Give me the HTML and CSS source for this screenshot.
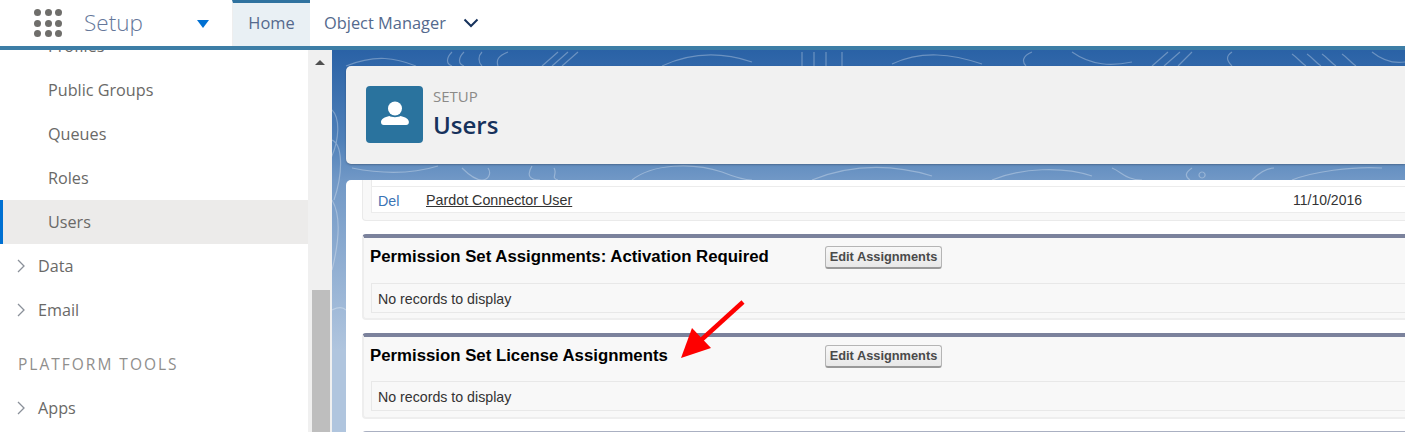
FILE: index.html
```html
<!DOCTYPE html>
<html lang="en">
<head>
  <meta charset="UTF-8">
  <title>Users | Setup</title>
  <link rel="stylesheet" href="styles.css">
</head>
<body>
  <header class="topbar">
    <div class="waffle">
      <i></i><i></i><i></i><i></i><i></i><i></i><i></i><i></i><i></i>
    </div>
    <span class="app-name">Setup</span>
    <span class="app-caret"></span>
    <a class="tab tab-active">Home</a>
    <a class="tab">Object Manager</a>
    <svg class="tab-chevron" width="16" height="10" viewBox="0 0 16 10"><path d="M1.5 1.5 8 8l6.500-6.500" fill="none" stroke="#16325c" stroke-width="2"/></svg>
  </header>

  <div class="main">
    <nav class="sidebar">
      <a class="nav-item nav-first">Profiles</a>
      <a class="nav-item">Public Groups</a>
      <a class="nav-item">Queues</a>
      <a class="nav-item">Roles</a>
      <a class="nav-item nav-active">Users</a>
      <a class="nav-item nav-parent"><svg class="arrow" width="9" height="14" viewBox="0 0 9 14"><path d="M1 1l6 6-6 6" fill="none" stroke="#8a9099" stroke-width="1.300"/></svg>Data</a>
      <a class="nav-item nav-parent"><svg class="arrow" width="9" height="14" viewBox="0 0 9 14"><path d="M1 1l6 6-6 6" fill="none" stroke="#8a9099" stroke-width="1.300"/></svg>Email</a>
      <div class="nav-title">PLATFORM TOOLS</div>
      <a class="nav-item nav-parent"><svg class="arrow" width="9" height="14" viewBox="0 0 9 14"><path d="M1 1l6 6-6 6" fill="none" stroke="#8a9099" stroke-width="1.300"/></svg>Apps</a>
    </nav>

    <div class="scrollbar">
      <span class="scroll-up"></span>
      <div class="scroll-thumb"></div>
    </div>

    <div class="content">
      <svg class="topo" width="1073" height="382" viewBox="0 0 1073 382" fill="none" stroke="#fff" stroke-opacity=".3" stroke-width="1.200">
        <path d="M14 16c30-12 50-8 70 0M120 2c-6 6-6 12 0 14M132 2c-6 6-6 12 0 14M150 2c-4 4-4 10 0 14M176 2c-10 4-12 8-10 14M210 16 226 2M220 16 236 2M230 16 246 2"/>
        <path d="M330 16c30-14 60-14 90-4M470 2v14M482 2v14M494 2v14M510 2v14M560 14c30-14 60-10 90 0M700 2c-10 4-10 10-6 14M740 2c20 14 40 14 60 10M820 16 836 2M832 16 848 2M846 16 860 2M900 16c-6-6-6-10 0-14M960 4c6 4 8 8 14 12M975 4c6 4 8 8 14 12M990 4c6 4 8 8 14 12M1010 4c6 4 8 8 14 12M1040 2c10 8 20 12 33 10"/>
        <path d="M20 118c30 6 60 6 86-2M130 118c8 8 14 12 20 12s10-6 6-12M200 116c-6 10-2 14 8 14M222 118c4 6-4 10 4 12M300 130c20-16 60-18 90-8 10 4 20 8 30 8M480 130c40-16 80-16 120-4M660 130c30-12 70-14 100-4M780 118c10 4 14 12 30 12M860 118c-6 4-8 8-2 12M870 122a3 3 0 1 0 .100 0M920 130c6-6 14-12 22-12M960 130c20-8 60-14 90-12"/>
        <path d="M0 60c8 8 8 30-2 50M0 90c10 4 12 30 2 60M0 150c6 10 10 30 0 70M0 260c8-4 12-2 14 0"/>
      </svg>

      <section class="title-card">
        <div class="title-icon">
          <svg width="30" height="28" viewBox="0 0 30 28"><circle cx="15" cy="8.500" r="7" fill="#fff"/><path d="M3 25c-2 0-3-1-3-3 0-3 4-5 9-6 2 1.500 10 1.500 12 0 5 1 9 3 9 6 0 2-1 3-3 3z" fill="#fff" transform="translate(1 0) scale(.93 1)"/></svg>
        </div>
        <div class="title-text">
          <div class="title-over">SETUP</div>
          <h1 class="title-main">Users</h1>
        </div>
      </section>

      <div class="panel">
        <div class="list-end">
          <div class="row-gap"></div>
          <div class="user-row">
            <a class="del">Del</a>
            <a class="user-link">Pardot Connector User</a>
            <span class="user-date">11/10/2016</span>
          </div>
        </div>

        <section class="related">
          <div class="related-head">
            <h3 class="related-title">Permission Set Assignments: Activation Required</h3>
            <button class="btn">Edit Assignments</button>
          </div>
          <div class="no-records">No records to display</div>
        </section>

        <section class="related related-second">
          <div class="related-head">
            <h3 class="related-title">Permission Set License Assignments</h3>
            <button class="btn">Edit Assignments</button>
          </div>
          <div class="no-records">No records to display</div>
        </section>

        <section class="related related-last"></section>
      </div>

      <svg class="red-arrow" width="66" height="60" viewBox="0 0 66 60"><path d="M63 2 19.500 41.500" stroke="#fe0000" stroke-width="4.500" fill="none"/><path d="M1 58 12 28l19 20z" fill="#fe0000"/></svg>
    </div>
  </div>
</body>
</html>
```

FILE: styles.css
```css
html, body {
  margin: 0;
  height: 432px;
  overflow: hidden;
  background: #fff;
}

body {
  display: flex;
  flex-direction: column;
  font-family: "Open Sans", "Noto Sans", sans-serif;
}

/* top bar */
.topbar {
  display: flex;
  align-items: stretch;
  height: 46px;
  flex: none;
  border-bottom: 4px solid #3d7ea6;
  background: #fff;
  position: relative;
  z-index: 2;
}

.waffle {
  display: grid;
  grid-template-columns: repeat(3, 7px);
  gap: 3.500px;
  align-content: center;
  margin-left: 34px;
  width: 28px;
  height: 46px;
}

.waffle i {
  width: 7px;
  height: 7px;
  border-radius: 50%;
  background: #6f6e6b;
}

.app-name {
  margin-left: 22px;
  width: 113px;
  font-size: 22.500px;
  line-height: 45px;
  color: #65779a;
  font-weight: 300;
}

.app-caret {
  align-self: center;
  width: 0;
  height: 0;
  border-left: 6.500px solid transparent;
  border-right: 6.500px solid transparent;
  border-top: 8px solid #0070d2;
  margin-top: 2px;
}

.tab {
  font-size: 16.400px;
  line-height: 45px;
  color: #54698d;
  padding: 0 14px;
}

.tab-active {
  margin-left: 23px;
  width: 78px;
  box-sizing: border-box;
  padding: 0;
  text-align: center;
  background: #e9f0f4;
  border-top: 3px solid #2f729f;
  border-left: 1px solid #eee;
  line-height: 40px;
}

.tab-chevron {
  align-self: center;
  margin-left: 3px;
}

/* main area */
.main {
  display: flex;
  flex: 1;
  min-height: 0;
}

.sidebar {
  width: 308px;
  flex: none;
  overflow: hidden;
  background: #fff;
}

.nav-item {
  display: block;
  height: 44px;
  line-height: 44px;
  padding-left: 48px;
  font-size: 16.200px;
  color: #6a6967;
}

.nav-first {
  margin-top: -26px;
}

.nav-active {
  background: #ecebea;
  box-shadow: inset 3px 0 0 #0070d2;
}

.nav-parent {
  display: flex;
  align-items: center;
  padding-left: 38px;
  position: relative;
}

.arrow {
  margin-left: -21px;
  margin-right: 12px;
}

.nav-title {
  margin-top: 10px;
  height: 44px;
  line-height: 44px;
  padding-left: 18px;
  font-size: 15.500px;
  letter-spacing: 2px;
  color: #8f8e8c;
}

.scrollbar {
  width: 24px;
  flex: none;
  background: #f0f0f0;
  display: flex;
  flex-direction: column;
  align-items: center;
}

.scroll-up {
  margin-top: 10px;
  width: 0;
  height: 0;
  border-left: 5px solid transparent;
  border-right: 5px solid transparent;
  border-bottom: 5px solid #505050;
}

.scroll-thumb {
  margin-top: 225px;
  width: 18px;
  flex: 1;
  background: #bebebe;
  margin-left: 1px;
}

.content {
  flex: 1;
  min-width: 0;
  position: relative;
  padding-left: 14px;
  background: linear-gradient(#2a62a6 0, #4f80b8 90px, #7198c6 130px, #b0c5de 300px);
  overflow: hidden;
}

.topo {
  position: absolute;
  left: 0;
  top: 0;
}

/* page title */
.title-card {
  position: relative;
  display: flex;
  align-items: center;
  height: 98px;
  margin-top: 16px;
  background: #f1f1f1;
  border-radius: 5px 0 0 5px;
  box-shadow: 0 1px 2px rgba(0, 0, 0, .25);
}

.title-icon {
  display: flex;
  align-items: center;
  justify-content: center;
  width: 57px;
  height: 57px;
  margin-left: 20px;
  margin-top: -2px;
  background: #2a739e;
  border-radius: 4px;
}

.title-text {
  margin-left: 10px;
  margin-top: -2px;
}

.title-over {
  font-size: 15px;
  line-height: 18px;
  color: #8b8a88;
}

.title-main {
  margin: 4px 0 0;
  font-size: 24px;
  line-height: 32px;
  font-weight: 600;
  color: #16325c;
}

/* detail panel */
.panel {
  position: relative;
  height: 252px;
  margin-top: 16px;
  padding-left: 16px;
  background: #fff;
  border-radius: 5px 0 0 0;
  overflow: hidden;
  font-family: "Liberation Sans", Arial, sans-serif;
}

.list-end {
  height: 41px;
  border: 1px solid #eaeaea;
  border-top: 0;
  border-right: 0;
  border-radius: 0 0 0 4px;
  box-sizing: border-box;
  padding-left: 8px;
  background: #f8f8f8;
}

.row-gap {
  height: 6px;
  background: #fff;
  border-left: 1px solid #eaeaea;
}

.user-row {
  display: flex;
  align-items: center;
  height: 25px;
  background: #fff;
  border: 1px solid #ececec;
  border-right: 0;
  font-size: 14.300px;
  color: #333;
}

.del {
  margin-left: 6px;
  width: 48px;
  color: #3b74b5;
  position: relative;
  top: 1px;
}

.user-link {
  text-decoration: underline;
}

.user-date {
  margin-left: auto;
  margin-right: 43px;
  font-size: 14px;
}

.related {
  box-sizing: border-box;
  height: 86px;
  margin-top: 13px;
  padding-left: 7px;
  background: #f8f8f8;
  border: 2px solid #eeeeee;
  border-top: 4px solid #7b829c;
  border-right: 0;
  border-radius: 4px 0 0 4px;
}

.related-last {
  margin-top: 12px;
  border-top-color: #aab0c2;
}

.related-head {
  display: flex;
  align-items: center;
  height: 38px;
}

.related-title {
  margin: 0;
  width: 455px;
  margin-left: -1px;
  font-size: 16.800px;
  font-weight: bold;
  color: #000;
}

.btn {
  width: 117px;
  height: 23px;
  padding: 0;
  font-family: "Liberation Sans", Arial, sans-serif;
  font-size: 12.800px;
  font-weight: bold;
  color: #4a4a4a;
  background: linear-gradient(#f8f8f8, #e8e8e8);
  border: 1px solid #b5b5b5;
  border-bottom: 2px solid #999;
  border-radius: 3px;
}

.no-records {
  margin-top: 7px;
  height: 30px;
  line-height: 30px;
  padding-left: 6px;
  font-size: 14.200px;
  color: #333;
  background: #f8f8f8;
  border: 1px solid #e8e8e8;
  border-right: 0;
  box-sizing: border-box;
}

.related-second .no-records {
  margin-top: 6px;
}

/* annotation over the page */
.red-arrow {
  position: absolute;
  left: 348px;
  top: 250px;
}
```
